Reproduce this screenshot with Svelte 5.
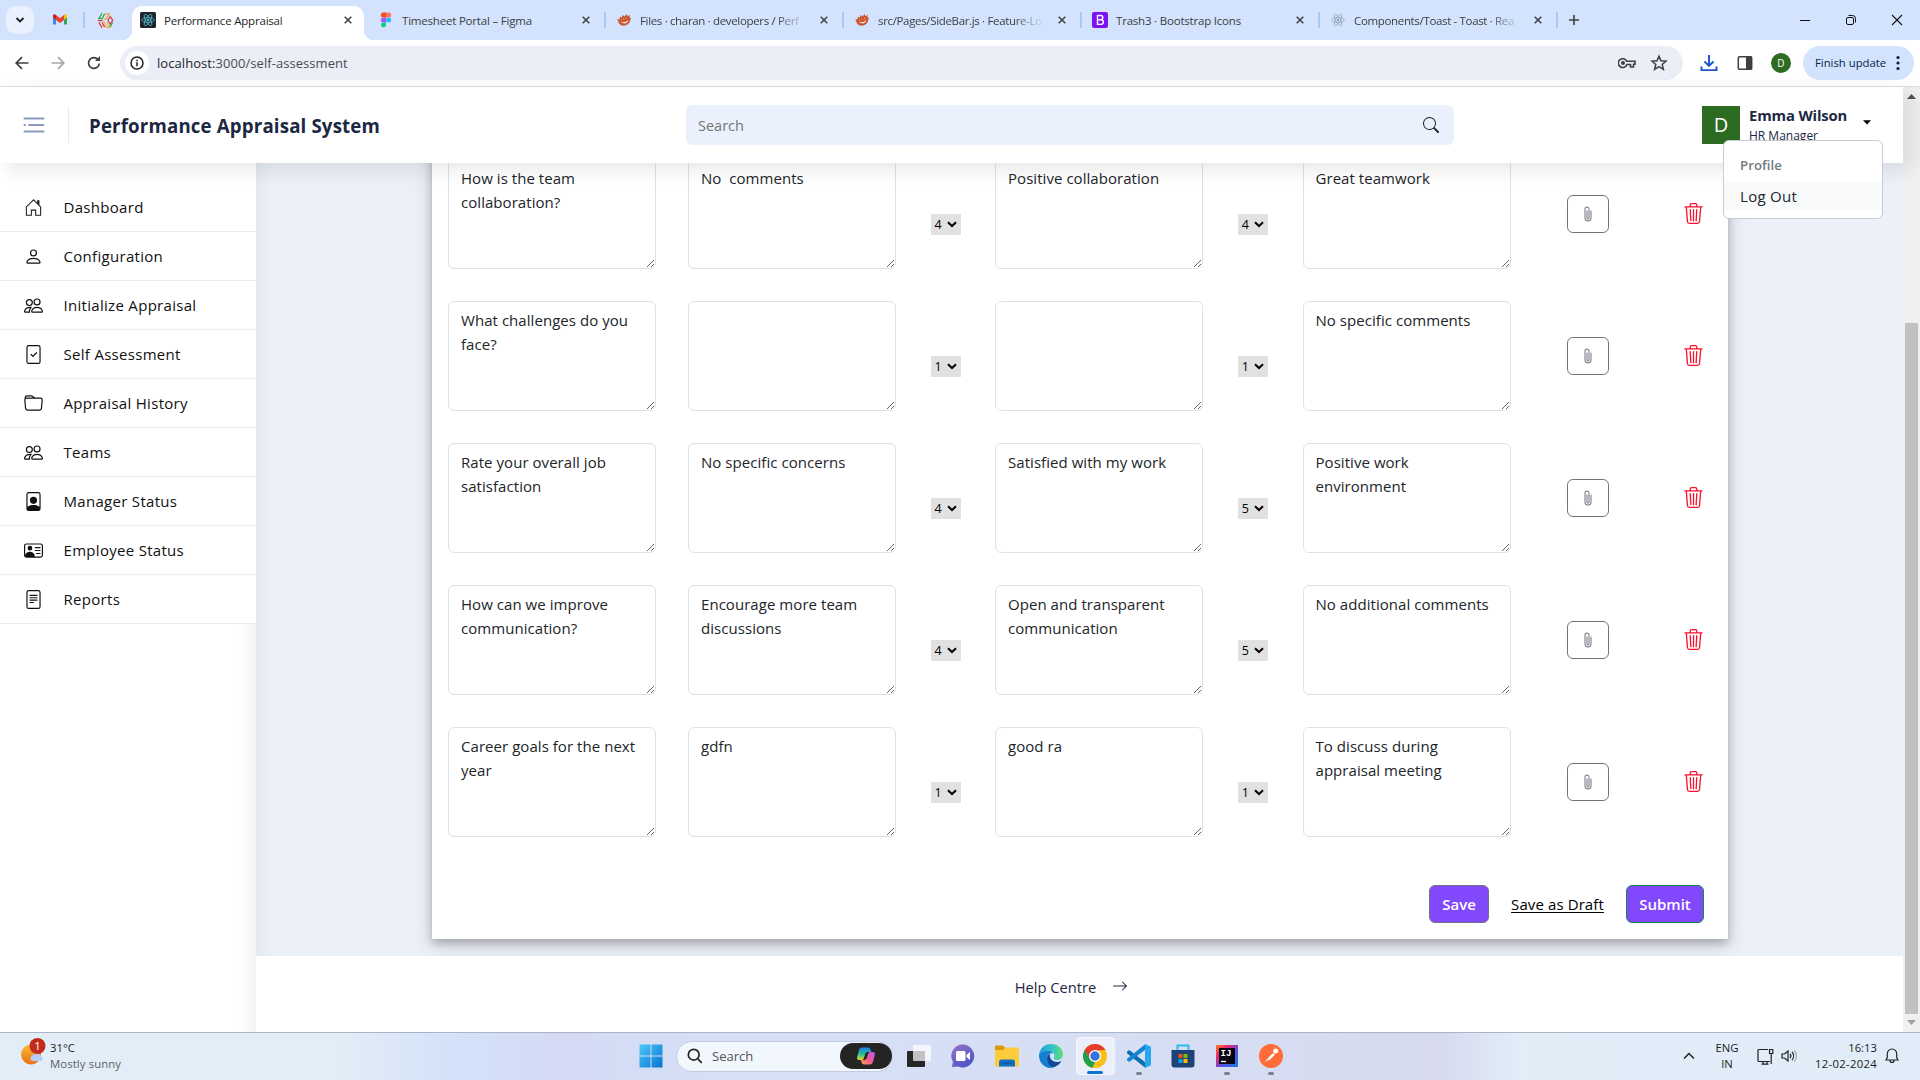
<script>
  const tabs = [
    { title: 'Performance Appraisal', icon: 'react', active: true },
    { title: 'Timesheet Portal – Figma', icon: 'figma', line: true },
    { title: 'Files · charan · developers / Perf', icon: 'claw', line: true, fade: true },
    { title: 'src/Pages/SideBar.js · Feature-Lo', icon: 'claw', line: true, fade: true },
    { title: 'Trash3 · Bootstrap Icons', icon: 'boot', line: true },
    { title: 'Components/Toast - Toast · Rea', icon: 'react2', line: true, fade: true }
  ];

  const paths = {
    person: 'M8 8a3 3 0 1 0 0-6 3 3 0 0 0 0 6Zm2-3a2 2 0 1 1-4 0 2 2 0 0 1 4 0Zm4 8c0 1-1 1-1 1H3s-1 0-1-1 1-4 6-4 6 3 6 4Zm-1-.004c-.001-.246-.154-.986-.832-1.664C11.516 10.68 10.289 10 8 10c-2.29 0-3.516.68-4.168 1.332-.678.678-.83 1.418-.832 1.664h10Z',
    people: 'M15 14s1 0 1-1-1-4-5-4-5 3-5 4 1 1 1 1h8Zm-7.978-1A.261.261 0 0 1 7 12.996c.001-.264.167-1.03.76-1.72C8.312 10.629 9.282 10 11 10c1.717 0 2.687.63 3.24 1.276.593.69.758 1.457.76 1.72l-.008.002a.274.274 0 0 1-.014.002H7.022ZM11 7a2 2 0 1 0 0-4 2 2 0 0 0 0 4Zm3-2a3 3 0 1 1-6 0 3 3 0 0 1 6 0ZM6.936 9.28a5.88 5.88 0 0 0-1.23-.247A7.35 7.35 0 0 0 5 9c-4 0-5 3-5 4 0 .667.333 1 1 1h4.216A2.238 2.238 0 0 1 5 13c0-1.01.377-2.042 1.09-2.904.243-.294.526-.569.846-.816ZM4.92 10A5.493 5.493 0 0 0 4 13H1c0-.26.164-1.03.76-1.724.545-.636 1.492-1.256 3.16-1.275ZM1.5 5.5a3 3 0 1 1 6 0 3 3 0 0 1-6 0Zm3-2a2 2 0 1 0 0 4 2 2 0 0 0 0-4Z',
    check: 'M10.854 6.146a.5.5 0 0 1 0 .708l-3 3a.5.5 0 0 1-.708 0l-1.5-1.5a.5.5 0 1 1 .708-.708L7.5 8.793l2.646-2.647a.5.5 0 0 1 .708 0zM4 0a2 2 0 0 0-2 2v12a2 2 0 0 0 2 2h8a2 2 0 0 0 2-2V2a2 2 0 0 0-2-2H4zm0 1h8a1 1 0 0 1 1 1v12a1 1 0 0 1-1 1H4a1 1 0 0 1-1-1V2a1 1 0 0 1 1-1z',
    folder: 'M.54 3.87.5 3a2 2 0 0 1 2-2h3.672a2 2 0 0 1 1.414.586l.828.828A2 2 0 0 0 9.828 3h3.982a2 2 0 0 1 1.992 2.181l-.637 7A2 2 0 0 1 13.174 14H2.826a2 2 0 0 1-1.991-1.819l-.637-7a1.99 1.99 0 0 1 .342-1.31zM2.19 4a1 1 0 0 0-.996 1.09l.637 7a1 1 0 0 0 .995.91h10.348a1 1 0 0 0 .995-.91l.637-7A1 1 0 0 0 13.81 4H2.19zm4.69-1.707A1 1 0 0 0 6.172 2H2.5a1 1 0 0 0-1 .981l.006.139C1.72 3.042 1.95 3 2.19 3h5.396l-.707-.707z',
    manager: 'M12 1a1 1 0 0 1 1 1v10.755S12 11 8 11s-5 1.755-5 1.755V2a1 1 0 0 1 1-1h8zM4 0a2 2 0 0 0-2 2v12a2 2 0 0 0 2 2h8a2 2 0 0 0 2-2V2a2 2 0 0 0-2-2H4zM8 10a3 3 0 1 0 0-6 3 3 0 0 0 0 6z',
    card: 'M5 8a2 2 0 1 0 0-4 2 2 0 0 0 0 4Zm4-2.5a.5.5 0 0 1 .5-.5h4a.5.5 0 0 1 0 1h-4a.5.5 0 0 1-.5-.5ZM9 8a.5.5 0 0 1 .5-.5h4a.5.5 0 0 1 0 1h-4A.5.5 0 0 1 9 8Zm1 2.5a.5.5 0 0 1 .5-.5h3a.5.5 0 0 1 0 1h-3a.5.5 0 0 1-.5-.5ZM2 2a2 2 0 0 0-2 2v8a2 2 0 0 0 2 2h12a2 2 0 0 0 2-2V4a2 2 0 0 0-2-2H2ZM1 4a1 1 0 0 1 1-1h12a1 1 0 0 1 1 1v8a1 1 0 0 1-1 1H8.96c.026-.163.04-.33.04-.5C9 10.567 7.21 9 5 9c-2.086 0-3.8 1.398-3.984 3.181A1.006 1.006 0 0 1 1 12V4Z',
    text: 'M5 4a.5.5 0 0 0 0 1h6a.5.5 0 0 0 0-1H5zm-.5 2.5A.5.5 0 0 1 5 6h6a.5.5 0 0 1 0 1H5a.5.5 0 0 1-.5-.5zM5 8a.5.5 0 0 0 0 1h6a.5.5 0 0 0 0-1H5zm0 2a.5.5 0 0 0 0 1h3a.5.5 0 0 0 0-1H5zM2 2a2 2 0 0 1 2-2h8a2 2 0 0 1 2 2v12a2 2 0 0 1-2 2H4a2 2 0 0 1-2-2V2zm10-1H4a1 1 0 0 0-1 1v12a1 1 0 0 0 1 1h8a1 1 0 0 0 1-1V2a1 1 0 0 0-1-1z',
    clip: 'M4.5 3a2.5 2.5 0 0 1 5 0v9a1.5 1.5 0 0 1-3 0V5a.5.5 0 0 1 1 0v7a.5.5 0 0 0 1 0V3a1.5 1.5 0 1 0-3 0v9a2.5 2.5 0 0 0 5 0V5a.5.5 0 0 1 1 0v7a3.5 3.5 0 1 1-7 0V3z',
    trash: 'M6.5 1h3a.5.5 0 0 1 .5.5v1H6v-1a.5.5 0 0 1 .5-.5ZM11 2.5v-1A1.5 1.5 0 0 0 9.5 0h-3A1.5 1.5 0 0 0 5 1.5v1H1.5a.5.5 0 0 0 0 1h.538l.853 10.66A2 2 0 0 0 4.885 16h6.23a2 2 0 0 0 1.994-1.84l.853-10.66h.538a.5.5 0 0 0 0-1H11Zm1.958 1-.846 10.58a1 1 0 0 1-.997.92h-6.23a1 1 0 0 1-.997-.92L3.042 3.5h9.916Zm-7.487 1a.5.5 0 0 1 .528.47l.5 8.5a.5.5 0 0 1-.998.06L5 5.03a.5.5 0 0 1 .47-.53Zm5.058 0a.5.5 0 0 1 .47.53l-.5 8.5a.5.5 0 1 1-.998-.06l.5-8.5a.5.5 0 0 1 .528-.47ZM8 4.5a.5.5 0 0 1 .5.5v8.5a.5.5 0 0 1-1 0V5a.5.5 0 0 1 .5-.5Z',
    search: 'M11.742 10.344a6.5 6.5 0 1 0-1.397 1.398h-.001c.03.04.062.078.098.115l3.85 3.85a1 1 0 0 0 1.415-1.414l-3.85-3.85a1.007 1.007 0 0 0-.115-.1zM12 6.5a5.5 5.5 0 1 1-11 0 5.5 5.5 0 0 1 11 0z',
    arrow: 'M1 8a.5.5 0 0 1 .5-.5h11.793l-3.147-3.146a.5.5 0 0 1 .708-.708l4 4a.5.5 0 0 1 0 .708l-4 4a.5.5 0 0 1-.708-.708L13.293 8.5H1.5A.5.5 0 0 1 1 8z'
  };

  const menu = [
    ['Dashboard', 'house'],
    ['Configuration', 'person'],
    ['Initialize Appraisal', 'people'],
    ['Self Assessment', 'check'],
    ['Appraisal History', 'folder'],
    ['Teams', 'people'],
    ['Manager Status', 'manager'],
    ['Employee Status', 'card'],
    ['Reports', 'text']
  ];

  const rows = [
    ['How is the team\ncollaboration?', 'No  comments', 4, 'Positive collaboration', 4, 'Great teamwork'],
    ['What challenges do you\nface?', '', 1, '', 1, 'No specific comments'],
    ['Rate your overall job\nsatisfaction', 'No specific concerns', 4, 'Satisfied with my work', 5, 'Positive work\nenvironment'],
    ['How can we improve\ncommunication?', 'Encourage more team\ndiscussions', 4, 'Open and transparent\ncommunication', 5, 'No additional comments'],
    ['Career goals for the next\nyear', 'gdfn', 1, 'good ra', 1, 'To discuss during\nappraisal meeting']
  ];
</script>

{#snippet bi(name, size)}
  <svg width={size} height={size} viewBox="0 0 16 16" fill="currentColor" fill-rule="evenodd"><path d={paths[name]} /></svg>
{/snippet}

{#snippet atom(color)}
  <g fill="none" stroke={color} stroke-width=".8">
    <ellipse cx="8" cy="8" rx="6.3" ry="2.4" />
    <ellipse cx="8" cy="8" rx="6.3" ry="2.4" transform="rotate(60 8 8)" />
    <ellipse cx="8" cy="8" rx="6.3" ry="2.4" transform="rotate(120 8 8)" />
  </g>
  <circle cx="8" cy="8" r="1.3" fill={color} />
{/snippet}

<div class="screen">
  <div class="tabstrip">
    <div class="tabsearch">
      <svg width="10" height="10" viewBox="0 0 10 10"><path d="M1.5 3 5 6.5 8.5 3" fill="none" stroke="#1f1f1f" stroke-width="1.8" /></svg>
    </div>
    <div class="pinned gmail">
      <svg width="16" height="14" viewBox="0 0 16 14">
        <path d="M1 3v8.5h3V5.5z" fill="#4285f4" /><path d="M15 3v8.5h-3V5.5z" fill="#34a853" />
        <path d="M4 2v5l4 3 4-3V2L8 5z" fill="#ea4335" /><path d="M1 2.8C1 1 2.8.8 4 2v4.8L1 4.5z" fill="#c5221f" /><path d="M15 2.8C15 1 13.2.8 12 2v4.8l3-2.3z" fill="#fbbc04" />
      </svg>
    </div>
    <div class="pinned spark">
      <svg width="17" height="17" viewBox="0 0 18 18" fill="none" stroke-width="1.3">
        <path d="M5.2 1.500 2 7M8 2 5.500 7H1" stroke="#39a84b" /><path d="M8.500 2H13l-3.500 5.500H7" stroke="#f2a52c" /><path d="m14 4.800 2.700 4-2.700 4-2.500-4z" stroke="#e0394a" />
        <path d="M1 9.200h5M2 11l3.200 5.500" stroke="#e0394a" /><path d="M5.200 11h2.300L10 16.300h3.500L10.500 11" stroke="#e9b72e" /><path d="M5.500 11.500 8 16" stroke="#e0394a" /><path d="m16.500 11-2.800 5" stroke="#39a84b" />
      </svg>
    </div>
    <div class="tabs">
      {#each tabs as t}
        <div class="tab" class:active={t.active} class:line={t.line}>
          <svg class="fav" width="16" height="16" viewBox="0 0 16 16">
            {#if t.icon === 'react'}
              <rect width="16" height="16" rx="1.5" fill="#20232a" />{@render atom('#4fb8d0')}
            {:else if t.icon === 'react2'}
              {@render atom('#93a5bd')}
            {:else if t.icon === 'figma'}
              <path d="M8 .5H5.3a2.5 2.5 0 0 0 0 5H8z" fill="#f24e1e" /><path d="M8 .5h2.7a2.5 2.5 0 0 1 0 5H8z" fill="#ff7262" />
              <path d="M8 5.500H5.300a2.500 2.500 0 0 0 0 5H8z" fill="#a259ff" /><circle cx="10.600" cy="8" r="2.500" fill="#1abcfe" />
              <path d="M8 10.500H5.300a2.500 2.500 0 1 0 2.700 2.500z" fill="#0acf83" />
            {:else if t.icon === 'claw'}
              <path d="M1 7.500 3.500 7.200 4 4.500l1.800 1.200L6.800 3l1.800 1.600L10.500 2l1 2.200 2.200-1.500-.3 2.500 1.300.2c0 3-1.200 6.200-4.200 7.600-3 1.300-6.300.500-7.500-1.700C2 9.800 2.500 8.500 1 7.500z" fill="#c9562f" />
              <path d="M4.500 9.500c2.500 1.300 5.500.8 8-1.800-.8 3.500-4.800 5.300-8 1.800z" fill="#fbe3d6" />
              <path d="m5 7.500.6 1.300M7.500 6.300l.5 1.700M10.300 5.500l.2 1.700" stroke="#f0a27c" stroke-width=".8" />
            {:else}
              <rect width="16" height="16" rx="2" fill="#7a12f5" />
              <path d="M5.500 3.500h3.200a2 2 0 0 1 0 4.200H5.500zm0 4.200H9a2.300 2.300 0 0 1 0 4.700H5.500z" fill="none" stroke="#fff" stroke-width="1.400" />
            {/if}
          </svg>
          <span class="title" class:fade={t.fade}>{t.title}</span>
          <svg class="x" width="8" height="8" viewBox="0 0 8 8"><path d="m.7.7 6.600 6.600m0-6.600L.7 7.300" stroke="#3c4043" stroke-width="1.500" /></svg>
        </div>
      {/each}
    </div>
    <svg class="plus" width="12" height="12" viewBox="0 0 12 12"><path d="M6 1v10M1 6h10" stroke="#3c4043" stroke-width="1.600" /></svg>
    <div class="wincontrols">
      <svg width="12" height="12" viewBox="0 0 12 12"><path d="M1 6.500h10" stroke="#111" /></svg>
      <svg width="12" height="12" viewBox="0 0 12 12" fill="none" stroke="#111"><rect x="1.500" y="3.500" width="7" height="7" rx="1.500" /><path d="M3.500 1.500h4a3 3 0 0 1 3 3v4" /></svg>
      <svg width="12" height="12" viewBox="0 0 12 12"><path d="m1 1 10 10M11 1 1 11" stroke="#111" stroke-width="1.100" /></svg>
    </div>
  </div>

  <div class="toolbar">
    <div class="nav">
      <svg width="16" height="16" viewBox="0 0 16 16" fill="none" stroke="#3c4043" stroke-width="1.700"><path d="M14.500 8H2.500M8 2.200 2.200 8 8 13.800" /></svg>
      <svg width="16" height="16" viewBox="0 0 16 16" fill="none" stroke="#a5a8ab" stroke-width="1.700"><path d="M1.500 8h12M8 2.200 13.800 8 8 13.800" /></svg>
      <svg width="16" height="16" viewBox="0 0 16 16" fill="none" stroke="#3c4043" stroke-width="1.700"><path d="M13.300 8.500A5.400 5.400 0 1 1 12 4.500" /><path d="M9 6h5V1z" fill="#3c4043" stroke="none" /></svg>
    </div>
    <div class="omnibox">
      <span class="info"><svg width="14" height="14" viewBox="0 0 14 14"><circle cx="7" cy="7" r="6" fill="none" stroke="#202124" stroke-width="1.500" /><path d="M7 6.300V10.300M7 3.700v1.500" stroke="#202124" stroke-width="1.500" /></svg></span>
      <span class="url"><b>localhost:</b>3000/self-assessment</span>
      <svg class="key" width="18" height="12" viewBox="0 0 18 12" fill="none" stroke="#3c4043" stroke-width="1.600"><path d="M8.700 4.200H17v3h-1.500V10h-3V7.500H8.900A4.400 4.400 0 1 1 8.700 4.200z" /><circle cx="5" cy="6" r="1.200" fill="#3c4043" /></svg>
      <svg width="18" height="18" viewBox="0 0 18 18" fill="none" stroke="#3c4043" stroke-width="1.500"><path d="m9 2.200 2 4.600 5 .4-3.800 3.300 1.200 4.900L9 12.700l-4.400 2.700 1.200-4.900L2 7.200l5-.4z" /></svg>
    </div>
    <div class="actions-bar">
      <svg width="18" height="18" viewBox="0 0 18 18" fill="none" stroke="#1a56c4" stroke-width="1.900"><path d="M9 1v11M4.500 7.500 9 12l4.500-4.500M1.500 12.500v3.600h15v-3.600" /></svg>
      <svg width="18" height="18" viewBox="0 0 18 18"><rect x="2.300" y="2.800" width="13.400" height="12.400" rx="1" fill="none" stroke="#3c4043" stroke-width="1.500" /><path d="M10 2.500h6v13h-6z" fill="#3c4043" /></svg>
      <span class="mini">D</span>
    </div>
    <div class="finish"><span>Finish update</span><svg width="4" height="16" viewBox="0 0 4 16" fill="#041e49"><circle cx="2" cy="2.500" r="1.600" /><circle cx="2" cy="8" r="1.600" /><circle cx="2" cy="13.500" r="1.600" /></svg></div>
  </div>

  <div class="page">
    <div class="app">
      <header>
        <svg class="burger" width="22" height="16" viewBox="0 0 22 16" stroke="#8a9abb" stroke-width="2" stroke-linecap="round"><path d="M1.500 1.500h19M6 8h14.500M1.500 8h.6M1.500 14.500h19" /></svg>
        <h1>Performance Appraisal System</h1>
        <div class="search"><span>Search</span>{@render bi('search', 16)}</div>
        <div class="user">
          <div class="avatar">D</div>
          <div class="who"><strong>Emma Wilson</strong><span>HR Manager</span></div>
          <svg class="caret" width="8" height="5" viewBox="0 0 8 5"><path d="M0 .3h8L4 4.500z" /></svg>
          <div class="dropdown">
            <div class="head">Profile</div>
            <div class="item">Log Out</div>
          </div>
        </div>
      </header>

      <div class="body">
        <aside>
          {#each menu as [label, icon]}
            <div class="menuitem">
              {#if icon === 'house'}
                <svg width="19" height="19" viewBox="0 0 16 16" fill="none" stroke="#222" stroke-width=".9"><path d="M8 1.500 2 7.500v7h4.200v-4.300h3.600v4.300H14v-7z" /><path d="M11 1.800h2v4.500l-2-2z" fill="#222" stroke="none" /></svg>
              {:else}{@render bi(icon, 19)}{/if}
              <span>{label}</span>
            </div>
          {/each}
          <div class="shade"></div>
        </aside>
        <main>
          <section class="card">
            {#each rows as r}
              <div class="row">
                {#each r as cell}
                  {#if typeof cell === 'number'}
                    <div class="rate"><span>{cell}</span><svg width="10" height="7" viewBox="0 0 10 7"><path d="M1 1.200 5 5l4-3.800" fill="none" stroke="#000" stroke-width="2" /></svg></div>
                  {:else}
                    <textarea value={cell}></textarea>
                  {/if}
                {/each}
                <button class="attach" aria-label="Attach">{@render bi('clip', 16)}</button>
                <div class="trash">{@render bi('trash', 21)}</div>
              </div>
            {/each}
            <div class="buttons">
              <button class="btn save">Save</button>
              <button class="draft">Save as Draft</button>
              <button class="btn submit">Submit</button>
            </div>
          </section>
          <footer><span>Help Centre</span>{@render bi('arrow', 16)}</footer>
        </main>
      </div>
    </div>
    <div class="scrollbar">
      <svg width="9" height="5" viewBox="0 0 9 5"><path d="M0 5 4.500 0 9 5z" fill="#505050" /></svg>
      <div class="thumb"></div>
      <svg width="9" height="5" viewBox="0 0 9 5"><path d="M0 0h9L4.500 5z" fill="#a0a0a0" /></svg>
    </div>
  </div>

  <div class="taskbar">
    <div class="weather">
      <svg width="26" height="32" viewBox="0 0 26 32">
        <defs><linearGradient id="sun" x1="0" y1="0" x2="0" y2="1"><stop offset="0" stop-color="#f5bd36" /><stop offset="1" stop-color="#ee6e12" /></linearGradient></defs>
        <circle cx="11" cy="17.500" r="10" fill="url(#sun)" />
        <path d="M12 24a3 3 0 0 1 .5-5.500 4.500 4.500 0 0 1 8.300 1A2.300 2.300 0 0 1 21 24z" fill="#b7cdf6" />
        <circle cx="17.500" cy="9" r="8" fill="#c42b1c" /><text x="17.600" y="13" text-anchor="middle" fill="#fff" font-size="11.500">1</text>
      </svg>
      <div><div>31°C</div><div class="dim">Mostly sunny</div></div>
    </div>
    <div class="center">
      <svg class="start" width="24" height="24" viewBox="0 0 24 24">
        <defs><linearGradient id="win" x1="0" y1="0" x2="1" y2="1"><stop offset="0" stop-color="#4cc8fb" /><stop offset="1" stop-color="#0673cf" /></linearGradient></defs>
        <path d="M.5.5h11v11H.5zM12.500.5h11v11h-11zM.5 12.500h11v11H.5zM12.500 12.500h11v11h-11z" fill="url(#win)" />
      </svg>
      <div class="tsearch">
        <svg width="16" height="16" viewBox="0 0 16 16" fill="none" stroke="#222" stroke-width="1.700"><circle cx="6.700" cy="6.700" r="5.400" /><path d="m10.800 10.800 4 4" /></svg>
        <span>Search</span>
        <div class="copilot">
          <svg width="20" height="20" viewBox="0 0 20 20">
            <defs><linearGradient id="c1" x1="0" y1="0" x2="0" y2="1"><stop offset="0" stop-color="#1d7df0" /><stop offset=".55" stop-color="#2cc08c" /><stop offset="1" stop-color="#f0d431" /></linearGradient><linearGradient id="c2" x1="1" y1="0" x2="0" y2="1"><stop offset="0" stop-color="#b45cf0" /><stop offset=".5" stop-color="#f2559a" /><stop offset="1" stop-color="#fba53d" /></linearGradient></defs>
            <path d="M6 1.500h6c1.700 0 2.200 1 2.700 3l.5 1.500H12c-2 0-2.600 1.200-3.200 3.200l-1 3C7.300 13.700 6.500 14 5 14H3C1.200 14 .7 12.500 1.200 10.700L3 4c.5-1.500 1.300-2.500 3-2.500z" fill="url(#c1)" />
            <path d="M14 18.500H8c-1.700 0-2.200-1-2.700-3L4.800 14H8c2 0 2.600-1.200 3.200-3.200l1-3c.5-1.500 1.300-1.800 2.800-1.800h2c1.800 0 2.300 1.500 1.800 3.300L17 16c-.5 1.500-1.300 2.500-3 2.500z" fill="url(#c2)" />
          </svg>
        </div>
      </div>
      <svg width="24" height="24" viewBox="0 0 24 24"><rect x="0" y="7" width="18" height="16" rx="1" fill="#262626" /><rect x="6" y="1" width="18" height="16" rx="1" fill="#fff" fill-opacity=".72" /></svg>
      <svg width="24" height="24" viewBox="0 0 24 24">
        <defs><linearGradient id="chat" x1="0" y1="0" x2=".6" y2="1"><stop offset="0" stop-color="#9a70c8" /><stop offset="1" stop-color="#4d55c8" /></linearGradient></defs>
        <path d="M12 .5A11.500 11.500 0 1 1 7 22.500L1 23l1-5A11.500 11.500 0 0 1 12 .5z" fill="url(#chat)" /><rect x="5" y="7" width="9.500" height="10" rx="1.500" fill="#fff" /><path d="m15.500 11 3.500-3v8l-3.500-3z" fill="#fff" /></svg>
      <svg width="24" height="24" viewBox="0 0 24 24"><path d="M0 1.500h8l2.500 3H24v8H0z" fill="#dc9a0b" /><path d="M0 6h8l2.500-2.500H24v19H0z" fill="#fdcc3c" /><path d="M4 22.500V18c0-1.500 1-2.500 2.500-2.500h11c1.500 0 2.500 1 2.500 2.500v4.500z" fill="#0f6fc0" /><path d="M7 19h10" stroke="#0a4f94" /></svg>
      <svg width="24" height="24" viewBox="0 0 24 24">
        <defs><linearGradient id="edge" x1="0" y1="0" x2="1" y2="0"><stop offset="0" stop-color="#1d9fdc" /><stop offset=".6" stop-color="#36c5c4" /><stop offset="1" stop-color="#66df6a" /></linearGradient></defs>
        <path d="M0 11C.5 4.500 6 0 12 0c7 0 12 5 12 10 0 4-3 6-6 6-2.500 0-4-1-3-2.200C17 10.500 13 6.500 8.500 6.500 4.500 6.500 1 8.500 0 11z" fill="url(#edge)" />
        <path d="M0 11c1-2.500 4.500-4.500 8.500-4.500 2.500 0 4.700 1.300 5.500 3-3-1-6 1.500-6 5 0 4.500 4 8.500 9 7.500-1.500 1.200-3.300 2-5.500 2C5 24 0 18.500 0 11z" fill="#1580d2" />
        <path d="M8 14.500c0-2 1-4 3-5-1 4.500 2 8.500 7 8.500 1.800 0 3.200-.5 4.400-1C20.500 20.500 17 23 14 23c-4-1-6-4.500-6-8.500z" fill="#124a96" /></svg>
      <div class="current">
        <svg width="24" height="24" viewBox="0 0 24 24"><circle cx="12" cy="12" r="12" fill="#fbc116" /><path d="M1.600 6A12 12 0 0 1 22.400 6L12 6.500 6.800 15z" fill="#e33b2e" /><path d="M1.600 6 7 15l5 3-2.500 5.800A12 12 0 0 1 1.600 6z" fill="#23a047" /><circle cx="12" cy="12" r="6" fill="#fff" /><circle cx="12" cy="12" r="4.700" fill="#3474e0" /></svg>
      </div>
      <div class="ico dot">
        <svg width="24" height="24" viewBox="0 0 24 24"><path d="M0 7.800 2.200 6 18.500 18.500V24L0 9.200z" fill="#0b6cb0" /><path d="M0 16.200 2.200 18 18.500 5.500V0L0 14.800z" fill="#1386cf" /><path d="m18 0 6 2.800v18.400L18 24z" fill="#2aa5ef" /></svg>
      </div>
      <svg width="24" height="24" viewBox="0 0 24 24"><path d="M6.500 7V1.500h11V7" fill="none" stroke="#30b8ee" stroke-width="2" /><path d="M.5 6h23v14.500a3 3 0 0 1-3 3h-17a3 3 0 0 1-3-3z" fill="#1c4373" /><path d="M7.500 10h4v4h-4z" fill="#f25022" /><path d="M12.500 10h4v4h-4z" fill="#7fba00" /><path d="M7.500 15h4v4h-4z" fill="#00a4ef" /><path d="M12.500 15h4v4h-4z" fill="#ffb900" /></svg>
      <div class="ico dot">
        <svg width="24" height="24" viewBox="0 0 24 24">
          <defs><linearGradient id="ij" x1="0" y1="0" x2="1" y2="1"><stop offset="0" stop-color="#fc801d" /><stop offset=".3" stop-color="#e8246e" /><stop offset=".6" stop-color="#5a50e8" /><stop offset="1" stop-color="#1480e0" /></linearGradient></defs>
          <path d="M1 1h22v22H1z" fill="url(#ij)" /><path d="M4 4h16v16H4z" fill="#080510" /><text class="mono" x="5.500" y="12" font-size="9" font-weight="700" fill="#fff">IJ</text><path d="M6 17.500h5" stroke="#fff" stroke-width="1.400" /></svg>
      </div>
      <div class="ico dot">
        <svg width="24" height="24" viewBox="0 0 24 24"><circle cx="12" cy="12" r="12" fill="#ff6c37" /><path d="m5 18.500 9-9.500 2 1.500-5 5.200-3.500 1z" fill="#fff" /><circle cx="16.700" cy="7" r="2.500" fill="#fff" /></svg>
      </div>
    </div>
    <div class="tray">
      <svg class="chev" width="12" height="8" viewBox="0 0 12 8"><path d="m1 6.500 5-5 5 5" fill="none" stroke="#222" stroke-width="1.500" /></svg>
      <div class="lang">ENG<br />IN</div>
      <svg class="mon" width="17" height="17" viewBox="0 0 17 17" fill="none" stroke="#222" stroke-width="1.200"><path d="M11 1.500H2a1 1 0 0 0-1 1v10a1 1 0 0 0 1 1h11M6 13.500v2.500M10 13.500v2.500M4.500 16.200h7M12.500 1.500h3.300v4h-3.300zM14.200 5.500V16" /></svg>
      <svg class="spk" width="17" height="14" viewBox="0 0 17 14" fill="none" stroke="#222" stroke-width="1.200"><path d="M1 5v4h2.500L7 12V2L3.500 5zM9 5a3 3 0 0 1 0 4M11 3a6 6 0 0 1 0 8" /><path d="M13 1.200a8 8 0 0 1 0 11.600" stroke="#aaa" /></svg>
      <div class="clock">16:13<br /><span>12-02-2024</span></div>
      <svg class="bell" width="14" height="16" viewBox="0 0 14 16" fill="none" stroke="#222" stroke-width="1.200"><path d="M7 1a4.700 4.700 0 0 0-4.700 4.700V9.500L1 12h12l-1.300-2.500V5.700A4.700 4.700 0 0 0 7 1zM5 12.500a2 2 0 0 0 4 0" /></svg>
    </div>
  </div>
</div>

<style>
  :global(body) { margin: 0; overflow: hidden; }
  .screen, .screen * { box-sizing: border-box; }
  .screen { width: 1920px; height: 1080px; display: flex; flex-direction: column; font-family: 'Open Sans', 'Noto Sans', sans-serif; background: #fff; overflow: hidden; }
  svg { display: block; flex: none; }
  button { font: inherit; padding: 0; margin: 0; }

  .tabstrip { height: 40px; flex: none; background: #d3e3fd; display: flex; padding-left: 6px; }
  .tabsearch { width: 28px; height: 28px; margin-top: 6px; border-radius: 10px; background: #e9f1fe; display: grid; place-items: center; }
  .pinned { height: 40px; display: flex; align-items: center; }
  .gmail { width: 49px; padding-left: 18px; }
  .spark { width: 46px; padding-left: 14px; position: relative; }
  .spark::before { content: ''; position: absolute; left: 0; top: 12px; width: 2px; height: 16px; background: #a8c7fa; }
  .tabs { display: flex; }
  .tab { position: relative; width: 238px; height: 40px; padding: 0 15px 0 11px; display: flex; align-items: center; font-size: 11.5px; letter-spacing: -.2px; color: #3c4043; }
  .tab.line::after { content: ''; position: absolute; right: -1px; top: 12px; width: 2px; height: 16px; background: #a8c7fa; }
  .tab.active { z-index: 1; color: #1f1f1f; }
  .tab.active::before { content: ''; position: absolute; z-index: -1; left: 3px; right: 3px; top: 6px; bottom: 0; background: #fff; border-radius: 10px 10px 0 0; }
  .tab.active::after { content: ''; position: absolute; z-index: -1; left: -7px; right: -7px; bottom: 0; height: 10px; background: radial-gradient(circle at 0 0, transparent 10px, #fff 10.500px) left / 10px 10px no-repeat, radial-gradient(circle at 100% 0, transparent 10px, #fff 10.500px) right / 10px 10px no-repeat; }
  .title { flex: 1; min-width: 0; margin: 1px 12px 0 8px; white-space: nowrap; }
  .fade { letter-spacing: -.34px; -webkit-mask-image: linear-gradient(90deg, #000 calc(100% - 32px), transparent calc(100% - 2px)); mask-image: linear-gradient(90deg, #000 calc(100% - 32px), transparent calc(100% - 2px)); }
  .plus { margin: 14px 0 0 11px; }
  .wincontrols { margin: 14px 17px 0 auto; display: flex; gap: 34px; }

  .toolbar { height: 47px; flex: none; display: flex; align-items: center; padding: 0 6px 1px 14px; background: #fff; border-bottom: 1px solid #dcdee1; }
  .nav { display: flex; gap: 20px; width: 106px; }
  .omnibox { width: 1563px; height: 34px; border-radius: 17px; background: #ebeef7; display: flex; align-items: center; padding: 0 15px 0 5px; }
  .info { width: 24px; height: 24px; border-radius: 50%; background: #fff; display: grid; place-items: center; }
  .url { margin-left: 8px; font-size: 13px; letter-spacing: .06px; color: #474b50; }
  .url b { font-weight: 400; color: #1f1f1f; }
  .key { margin: 0 14px 0 auto; }
  .actions-bar { display: flex; align-items: center; gap: 18px; margin-left: 17px; }
  .mini { width: 20px; height: 20px; border-radius: 50%; background: #2e6b22; color: #fff; font-size: 10px; display: grid; place-items: center; margin-left: -1px; }
  .finish { margin-left: auto; width: 111px; height: 34px; border-radius: 17px; background: #d3e3fd; color: #041e49; font-size: 11.300px; letter-spacing: 0; display: flex; align-items: center; justify-content: space-between; padding: 0 14px 0 12px; }

  .page { height: 945px; flex: none; display: flex; }
  .app { width: 1903px; display: flex; flex-direction: column; }
  header { position: relative; z-index: 2; height: 76px; flex: none; background: #fff; display: flex; align-items: center; padding-left: 23px; box-shadow: 8px 6px 20px rgba(0, 0, 0, .1); }
  .burger { margin-right: 23px; }
  h1 { margin: 0; width: 618px; height: 36px; line-height: 37px; padding-left: 20px; border-left: 1px solid #e9ebef; font-size: 18.700px; font-weight: 700; color: #1c2743; letter-spacing: .15px; white-space: nowrap; }
  .search { width: 768px; height: 40px; border-radius: 6px; background: #eaf1fc; display: flex; align-items: center; justify-content: space-between; padding: 0 15px 0 12px; color: #212529; }
  .search span { font-size: 14.500px; color: #757575; }
  .user { position: relative; display: flex; margin-left: 248px; }
  .avatar { width: 38px; height: 38px; background: #2e6b22; color: #fff; font-size: 20px; line-height: 37px; text-align: center; }
  .who { margin-left: 9px; width: 98px; height: 38px; color: #1c2743; white-space: nowrap; }
  .who strong { display: block; font-size: 14.800px; line-height: 21px; font-weight: 700; letter-spacing: -.15px; margin-top: -1px; }
  .who span { display: block; font-size: 12px; line-height: 18px; margin-top: 1px; }
  .caret { margin: 14px 0 0 16px; }
  .dropdown { position: absolute; left: 21px; top: 34px; width: 160px; height: 79px; padding: 8px 0; border: 1px solid #c9ccd0; border-radius: 6px; background: #fff; }
  .head { height: 33px; line-height: 32px; padding-left: 16px; font-size: 13.200px; font-weight: 600; letter-spacing: .05px; color: #727a81; }
  .item { height: 28px; line-height: 28px; padding-left: 16px; font-size: 15px; letter-spacing: .3px; color: #212529; background: #f8f9fa; }

  .body { flex: 1; display: flex; min-height: 0; overflow: hidden; }
  aside { width: 256px; padding-top: 20px; background: #fff; display: flex; flex-direction: column; }
  .shade { flex: 1; background: linear-gradient(90deg, #fff 238px, #f3f3f3 256px); }
  .menuitem { height: 49px; padding: 1px 0 0 24px; display: flex; align-items: center; background: #fff; border-bottom: 1px solid #ebedf3; color: #111; font-size: 15px; letter-spacing: .3px; }
  .menuitem span { margin: -2px 0 0 20.500px; }
  main { width: 1647px; background: linear-gradient(90deg, #e4e8f1, #ecf0f8 16px); overflow: hidden; display: flex; flex-direction: column; }
  .card { width: 1296px; height: 796px; flex: none; margin: -20px 0 17px 176px; background: #fff; box-shadow: 0 4px 8px rgba(0, 0, 0, .22), 0 6px 20px rgba(0, 0, 0, .16); }
  .row { height: 142px; display: grid; grid-template-columns: 240px 240px 67px 240px 67.500px 240px 122px 79.500px; align-items: center; justify-items: center; }
  textarea { width: 208px; height: 110px; margin: 0; padding: 6px 12px; border: 1px solid #dee2e6; border-radius: 6px; background: #fff; color: #212529; font: 15px/24px 'Open Sans', 'Noto Sans', sans-serif; letter-spacing: .05px; white-space: pre; overflow: hidden; resize: both; outline: 0; display: block; }
  .rate { width: 30px; height: 21px; margin-top: 21px; padding: 0 4px; background: #e1e1e1; display: flex; align-items: center; justify-content: space-between; font-size: 12.500px; color: #000; }
  .attach { width: 42px; height: 38px; border: 1px solid #6c757d; border-radius: 6px; background: #fff; color: #6c757d; display: grid; place-items: center; }
  .trash { color: #fb0f2c; margin: -2px 0 0 10px; }
  .buttons { display: flex; justify-content: flex-end; align-items: center; padding: 32px 24px 0 0; }
  .btn { height: 38px; border-radius: 6px; background: #8248fb; color: #fff; font-size: 15px; font-weight: 600; letter-spacing: 0; }
  .save { width: 60px; border: 1px solid #6c757d; }
  .submit { width: 78px; border: 1px solid #198754; }
  .draft { width: 95px; margin: 0 21px; border: 0; background: none; color: #000; font-size: 15px; font-weight: 500; text-decoration: underline; text-underline-offset: 2px; letter-spacing: .1px; white-space: nowrap; }
  footer { flex: 1; background: #fff; display: flex; justify-content: center; padding: 22px 16px 0 0; gap: 16px; font-size: 14.700px; line-height: 18px; color: #1c2743; }
  .scrollbar { width: 17px; background: #f0f0f0; display: flex; flex-direction: column; align-items: center; padding: 7px 0 7px; }
  .thumb { width: 13px; height: 692px; margin-top: 224px; margin-bottom: 6px; background: #c1c1c1; }

  .taskbar { flex: 1; border-top: 1px solid #a9b5c3; background: linear-gradient(90deg, #e2edf7 0 340px, #d4e2fa 450px, #d5daf4 560px, #d5dff6 700px, #d6dff4 1100px, #d7daef 1440px, #e2edf8 1520px, #e0ecf8); display: flex; color: #1b1b1b; font-size: 11.300px; }
  .weather { width: 639px; display: flex; padding: 4px 0 0 20px; gap: 4px; line-height: 16px; }
  .weather > div { padding-top: 3px; }
  .dim { color: #5b6066; letter-spacing: .12px; }
  .center { display: flex; align-items: center; height: 46px; gap: 20px; }
  .start { margin-right: -7px; }
  .tsearch { width: 217px; height: 31px; border-radius: 16px; background: #f2f6fd; border: 1px solid #c3cce2; display: flex; align-items: center; padding: 0 0 0 10px; margin-right: -6px; font-size: 13px; color: #555; }
  .tsearch span { margin-left: 9px; }
  .copilot { margin-left: auto; width: 52px; height: 26px; border-radius: 13px; background: #242424; display: grid; place-items: center; }
  .current { position: relative; width: 38px; height: 38px; margin: 0 -7px; border-radius: 4px; background: #eceff9; border: 1px solid #f6f8fd; box-shadow: 2px 0 0 #e3e8f6; display: grid; place-items: center; }
  .current::after { content: ''; position: absolute; left: 10px; bottom: 0; width: 16px; height: 3px; border-radius: 2px; background: #0a74d1; }
  .ico { position: relative; }
  .dot::after { content: ''; position: absolute; left: 9px; bottom: -7px; width: 6px; height: 3px; border-radius: 2px; background: #7c8087; }
  .mono { font-family: 'Liberation Mono', monospace; }
  .tray { margin-left: auto; display: flex; align-items: center; height: 46px; line-height: 16px; padding-right: 21px; }
  .lang { width: 34px; text-align: center; margin-left: 15px; }
  .mon { margin-left: 13px; }
  .spk { margin-left: 7px; }
  .clock { width: 72px; text-align: right; margin: 0 8px 0 7px; white-space: nowrap; }
  .clock span { letter-spacing: .3px; }
</style>
